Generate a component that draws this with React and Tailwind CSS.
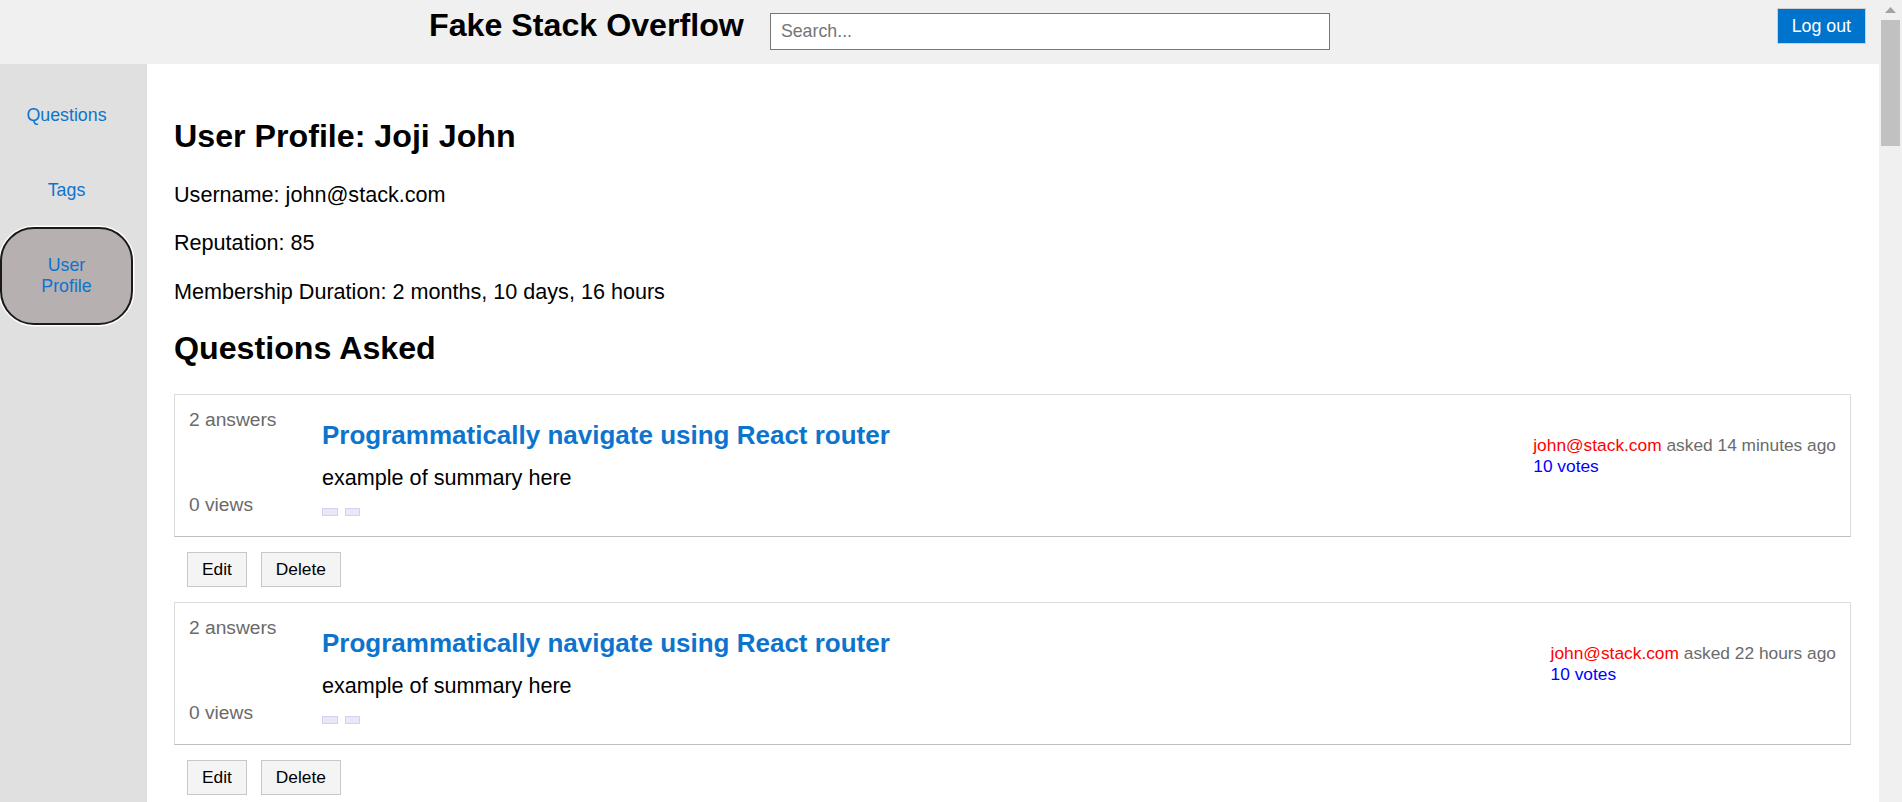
import React from "react";

const font = { fontFamily: '"Liberation Sans", Arial, sans-serif' };

function QuestionCard({ time }) {
  return (
    <div>
      <div className="flex h-[143px] border border-[#dcdcdc] border-b-[#bdbdbd] border-b-dotted bg-white">
        <div className="w-[147px] shrink-0 pl-[14px] pt-[14px] text-[19.2px] leading-[22px] text-[#6a6a6a]">
          <div>2 answers</div>
          <div className="mt-[63px]">0 views</div>
        </div>
        <div className="flex-1 pt-[25px]">
          <div className="text-[26px] font-bold leading-[30px] text-[#0d74ce]">
            Programmatically navigate using React router
          </div>
          <div className="mt-[15px] text-[21.6px] leading-[25px] text-black">
            example of summary here
          </div>
          <div className="mt-[18px] flex gap-[7px]">
            <span className="block h-[8px] w-[16px] border border-[#d2d2f0] bg-[#e8e8f8]" />
            <span className="block h-[8px] w-[15px] border border-[#d2d2f0] bg-[#e8e8f8]" />
          </div>
        </div>
        <div className="pr-[14px] pt-[40px] text-[17.33px] leading-[21px]">
          <div>
            <span className="text-[#ff0000]">john@stack.com</span>
            <span className="text-[#6b6b6b]"> asked {time}</span>
          </div>
          <div className="text-[#0000ff]">10 votes</div>
        </div>
      </div>
      <div className="mt-[15px] flex gap-[14px] pl-[13px]">
        <button className="h-[35px] border border-[#c8c8c8] bg-[#f4f4f4] px-[14px] text-[17.33px] text-black">
          Edit
        </button>
        <button className="h-[35px] border border-[#c8c8c8] bg-[#f4f4f4] px-[14px] text-[17.33px] text-black">
          Delete
        </button>
      </div>
    </div>
  );
}

export default function App() {
  return (
    <div className="flex h-screen w-full overflow-hidden bg-white" style={font}>
      <div className="flex min-w-0 flex-1 flex-col">
        <header className="flex h-[64px] shrink-0 items-start bg-[#f0f0f0] pl-[429px] pr-[13px]">
          <h1 className="mt-[7px] text-[32.2px] font-bold leading-[37px] text-black">
            Fake Stack Overflow
          </h1>
          <input
            type="text"
            placeholder="Search..."
            className="ml-[26px] mt-[13px] h-[37px] w-[560px] border border-[#767676] bg-white px-[10px] text-[17.8px] text-black placeholder:text-[#757575] outline-none"
          />
          <button className="ml-auto mt-[8px] h-[36px] border border-[#cfcfcf] bg-[#0074cc] px-[14px] text-[17.8px] text-white">
            Log out
          </button>
        </header>
        <div className="flex min-h-0 flex-1">
          <nav className="w-[147px] shrink-0 bg-[#e0e0e0] text-[17.8px] leading-[21px] text-[#0d74ce]">
            <div className="mt-[25px] flex h-[52px] w-[133px] items-center justify-center">
              Questions
            </div>
            <div className="mt-[23px] flex h-[52px] w-[133px] items-center justify-center">
              Tags
            </div>
            <div className="mt-[11px] flex h-[98px] w-[133px] items-center justify-center rounded-[34px] border-[2.67px] border-[#1a1a1a] bg-[#b6b0b0] text-center shadow-[0_0_0_1.5px_#ffffff]">
              <span className="w-[80px]">User Profile</span>
            </div>
          </nav>
          <main className="min-w-0 flex-1 overflow-hidden pl-[27px] pr-[28px] pt-[54px]">
            <h2 className="text-[32.2px] font-bold leading-[37px] text-black">
              User Profile: Joji John
            </h2>
            <p className="mt-[27px] text-[21.6px] leading-[25px] text-black">
              Username: john@stack.com
            </p>
            <p className="mt-[23px] text-[21.6px] leading-[25px] text-black">
              Reputation: 85
            </p>
            <p className="mt-[24px] text-[21.6px] leading-[25px] text-black">
              Membership Duration: 2 months, 10 days, 16 hours
            </p>
            <h2 className="mt-[26px] text-[32.2px] font-bold leading-[37px] text-black">
              Questions Asked
            </h2>
            <div className="mt-[27px] flex flex-col gap-[15px]">
              <QuestionCard time="14 minutes ago" />
              <QuestionCard time="22 hours ago" />
            </div>
          </main>
        </div>
      </div>
      <div className="flex w-[23px] shrink-0 flex-col items-center bg-[#f0f0f0]">
        <div className="flex h-[20px] w-full items-center justify-center">
          <svg width="11" height="7" viewBox="0 0 11 7">
            <polygon points="5.5,0 11,6 0,6" fill="#a3a3a3" />
          </svg>
        </div>
        <div className="h-[126px] w-[19px] bg-[#c1c1c1]" />
      </div>
    </div>
  );
}
